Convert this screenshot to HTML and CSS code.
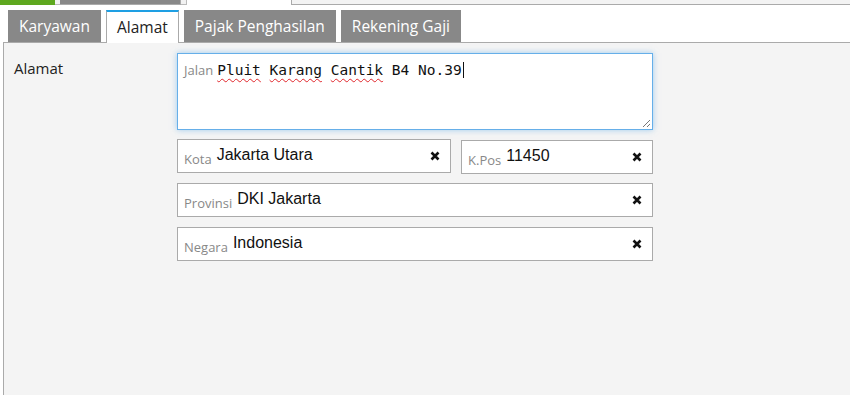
FILE: index.html
```html
<!DOCTYPE html>
<html lang="id">
<head>
    <meta charset="UTF-8">
    <meta name="viewport" content="width=device-width, initial-scale=1.0">
    <title>Data Karyawan - Alamat</title>
    <link rel="stylesheet" href="styles.css">
</head>
<body>

    <div class="top-strip">
        <div class="strip-green"></div>
        <div class="strip-light"></div>
        <div class="strip-gray"></div>
        <div class="strip-light strip-edge"></div>
        <div class="strip-white"></div>
        <div class="strip-box"></div>
    </div>

    <div class="tabs">
        <div class="tab">Karyawan</div>
        <div class="tab active">Alamat</div>
        <div class="tab">Pajak Penghasilan</div>
        <div class="tab">Rekening Gaji</div>
    </div>

    <div class="panel">
        <div class="row-label">Alamat</div>

        <div class="form">
            <div class="address-box">
                <span class="field-label">Jalan</span>
                <span class="address-text"><span class="typo">Pluit</span> <span class="typo">Karang</span> <span class="typo">Cantik</span> B4 No.39<span class="caret"></span></span>
                <svg class="grip" width="8" height="8" viewBox="0 0 8 8">
                    <path d="M1 8 L8 1 M5 8 L8 5" stroke="#777" stroke-width="1"/>
                </svg>
            </div>

            <div class="field-row">
                <div class="field city">
                    <span class="field-label">Kota</span>
                    <span class="field-value">Jakarta Utara</span>
                    <svg class="clear" width="10" height="10" viewBox="0 0 10 10">
                        <path d="M1.5 1.5 L8.5 8.5 M8.5 1.5 L1.5 8.5" stroke="#111" stroke-width="2.6"/>
                    </svg>
                </div>
                <div class="field postal">
                    <span class="field-label">K.Pos</span>
                    <span class="field-value">11450</span>
                    <svg class="clear" width="10" height="10" viewBox="0 0 10 10">
                        <path d="M1.5 1.5 L8.5 8.5 M8.5 1.5 L1.5 8.5" stroke="#111" stroke-width="2.6"/>
                    </svg>
                </div>
            </div>

            <div class="field">
                <span class="field-label">Provinsi</span>
                <span class="field-value">DKI Jakarta</span>
                <svg class="clear" width="10" height="10" viewBox="0 0 10 10">
                    <path d="M1.5 1.5 L8.5 8.5 M8.5 1.5 L1.5 8.5" stroke="#111" stroke-width="2.6"/>
                </svg>
            </div>

            <div class="field">
                <span class="field-label">Negara</span>
                <span class="field-value">Indonesia</span>
                <svg class="clear" width="10" height="10" viewBox="0 0 10 10">
                    <path d="M1.5 1.5 L8.5 8.5 M8.5 1.5 L1.5 8.5" stroke="#111" stroke-width="2.6"/>
                </svg>
            </div>
        </div>
    </div>

</body>
</html>
```

FILE: styles.css
```css
body {
    margin: 0;
    font-family: "Open Sans", "Noto Sans", sans-serif;
    background-color: #fff;
    overflow: hidden;
}

/* leftover of the header above, scrolled away */
.top-strip {
    display: flex;
    height: 5px;
}

.strip-green {
    width: 55px;
    background-color: #5ea81f;
}

.strip-light {
    width: 5px;
    background-color: #f2f2f2;
    box-sizing: border-box;
    border-bottom: 1px solid #bbb;
}

.strip-edge {
    width: 6px;
    border-right: 1px solid #bbb;
}

.strip-gray {
    width: 121px;
    background-color: #888;
    box-sizing: border-box;
    border-bottom: 1px solid #aaa;
    border-right: 1px solid #aaa;
}

.strip-white {
    width: 104px;
}

.strip-box {
    flex: 1;
    background-color: #f3f3f3;
    box-sizing: border-box;
    border-left: 1px solid #aaa;
    border-bottom: 1px solid #aaa;
}

.tabs {
    display: flex;
    gap: 5px;
    margin-top: 5px;
    padding-left: 8px;
    position: relative;
    z-index: 1;
}

.tab {
    height: 32px;
    line-height: 32px;
    padding: 0 11px;
    font-size: 15.5px;
    color: #fff;
    background-color: #888;
    box-sizing: border-box;
    white-space: nowrap;
}

.tab.active {
    height: 33px;
    line-height: 30px;
    padding: 0 10px;
    margin-bottom: -1px;
    background-color: #fff;
    color: #222;
    border: 1px solid #aaa;
    border-top: 2px solid #1e9fe3;
    border-bottom: none;
}

.panel {
    display: flex;
    height: 360px;
    margin-left: 3px;
    padding: 10px 0 0 10px;
    background-color: #f4f4f4;
    border-top: 1px solid #aaa;
    border-left: 1px solid #aaa;
    box-sizing: border-box;
}

.row-label {
    width: 163px;
    padding-top: 5px;
    font-size: 15px;
    line-height: 20px;
    color: #222;
}

.form {
    display: flex;
    flex-direction: column;
    gap: 9px;
    width: 476px;
}

.address-box {
    position: relative;
    height: 77px;
    padding: 5px 6px;
    background-color: #fff;
    border: 1px solid #66afe9;
    box-shadow: 0 0 6px rgba(102, 175, 233, 0.6);
    box-sizing: border-box;
    display: flex;
    align-items: baseline;
}

.address-box .field-label {
    padding-top: 0;
    margin-right: 4px;
}

.address-text {
    font-family: "DejaVu Sans Mono", "Liberation Mono", monospace;
    font-size: 14.5px;
    line-height: 22px;
    color: #111;
    white-space: pre;
}

.typo {
    text-decoration: underline wavy #e0262b;
    text-decoration-thickness: 1px;
    text-underline-offset: 3px;
    text-decoration-skip-ink: none;
}

.caret {
    display: inline-block;
    width: 1px;
    height: 16px;
    margin-left: 1px;
    vertical-align: -3px;
    background-color: #111;
}

.grip {
    position: absolute;
    right: 2px;
    bottom: 2px;
}

.field-row {
    display: flex;
    gap: 10px;
}

.field {
    display: flex;
    align-items: center;
    height: 34px;
    padding: 0 10px 0 6px;
    background-color: #fff;
    border: 1px solid #aaa;
    box-sizing: border-box;
}

.field + .field {
    margin-top: 1px;
}

.field.city {
    width: 274px;
}

.field.postal {
    flex: 1;
}

.field-label {
    font-size: 13px;
    line-height: 16px;
    padding-top: 6px;
    margin-right: 5px;
    color: #888;
}

.field-value {
    flex: 1;
    font-family: "Liberation Sans", Arial, sans-serif;
    font-size: 16px;
    line-height: 20px;
    color: #111;
    margin-top: -2px;
}

.clear {
    flex: none;
}
```
